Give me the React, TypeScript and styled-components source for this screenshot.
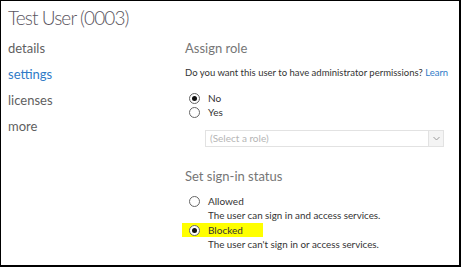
import styled, { createGlobalStyle } from 'styled-components';

const GlobalStyle = createGlobalStyle`
  html, body {
    margin: 0;
    padding: 0;
    background: #fff;
  }
  body {
    font-family: Lato, 'Open Sans', sans-serif;
  }
`;

const Frame = styled.div`
  box-sizing: border-box;
  width: 461px;
  height: 267px;
  border: 1px solid #000;
  border-right-width: 2px;
  border-bottom-width: 2px;
  overflow: hidden;
  background: #fff;
`;

const Title = styled.h1`
  margin: 0;
  padding: 4px 0 0 7px;
  font-size: 19px;
  letter-spacing: -0.9px;
  font-weight: 300;
  color: #5a5560;
  line-height: 25px;
`;

const Body = styled.div`
  display: grid;
  grid-template-columns: 184px 1fr;
  margin-top: 9px;
`;

const Nav = styled.ul`
  list-style: none;
  margin: 0;
  padding: 0 0 0 7px;
  display: flex;
  flex-direction: column;
  gap: 8px;
`;

const NavItem = styled.li<{ $active?: boolean }>`
  font-size: 13px;
  line-height: 18px;
  color: ${(p) => (p.$active ? '#2f7bc7' : '#5f5f5f')};
`;

const Content = styled.div`
  display: flex;
  flex-direction: column;
  white-space: nowrap;
`;

const SectionTitle = styled.h2`
  margin: 0;
  font-size: 13px;
  font-weight: 400;
  color: #767676;
  line-height: 18px;
`;

const Question = styled.p`
  margin: 9px 0 0;
  font-size: 9.5px;
  line-height: 14px;
  color: #333;
`;

const Link = styled.span`
  color: #2f7bc7;
`;

const RadioGroup = styled.div<{ $top: number }>`
  display: flex;
  flex-direction: column;
  margin-top: ${(p) => p.$top}px;
`;

const RadioRow = styled.label<{ $highlight?: boolean }>`
  display: flex;
  align-items: center;
  gap: 8px;
  height: 14px;
  font-size: 10px;
  color: #333;
  width: fit-content;
  margin-left: -3px;
  padding: 0 20px 0 7px;
  background: ${(p) => (p.$highlight ? '#ffff00' : 'transparent')};
`;

const RadioCircle = styled.span<{ $checked?: boolean }>`
  box-sizing: border-box;
  width: 11px;
  height: 11px;
  border: 1px solid #666;
  border-radius: 50%;
  background: #fff;
  display: flex;
  align-items: center;
  justify-content: center;
  &::after {
    content: '';
    width: 5px;
    height: 5px;
    border-radius: 50%;
    background: ${(p) => (p.$checked ? '#111' : 'transparent')};
  }
`;

const RadioText = styled.span`
  line-height: 14px;
`;

const Hint = styled.div`
  font-size: 9.8px;
  line-height: 15px;
  color: #333;
  padding-left: 23px;
`;

const Select = styled.div`
  display: flex;
  align-items: stretch;
  box-sizing: border-box;
  width: 239px;
  height: 17px;
  margin: 11px 0 0 20px;
  border: 1px solid #e2e2e2;
  background: #fff;
`;

const SelectText = styled.span`
  flex: 1;
  font-size: 10px;
  line-height: 15px;
  color: #b5b5b5;
  padding-left: 4px;
`;

const SelectArrow = styled.span`
  width: 14px;
  border-left: 1px solid #e2e2e2;
  background: #f4f4f4;
  display: flex;
  align-items: center;
  justify-content: center;
`;

const Spacer = styled.div<{ $h: number }>`
  height: ${(p) => p.$h}px;
`;

function Radio({ checked, label, highlight }: { checked?: boolean; label: string; highlight?: boolean }) {
  return (
    <RadioRow $highlight={highlight}>
      <RadioCircle $checked={checked} />
      <RadioText>{label}</RadioText>
    </RadioRow>
  );
}

export default function App() {
  return (
    <>
      <GlobalStyle />
      <Frame>
        <Title>Test User (0003)</Title>
        <Body>
          <Nav>
            <NavItem>details</NavItem>
            <NavItem $active>settings</NavItem>
            <NavItem>licenses</NavItem>
            <NavItem>more</NavItem>
          </Nav>
          <Content>
            <SectionTitle>Assign role</SectionTitle>
            <Question>
              Do you want this user to have administrator permissions? <Link>Learn</Link>
            </Question>
            <RadioGroup $top={11}>
              <Radio checked label="No" />
              <Radio label="Yes" />
            </RadioGroup>
            <Select>
              <SelectText>(Select a role)</SelectText>
              <SelectArrow>
                <svg width="7" height="5" viewBox="0 0 7 5">
                  <path d="M0.5 1 L3.5 4 L6.5 1" fill="none" stroke="#9a9a9a" strokeWidth="1" />
                </svg>
              </SelectArrow>
            </Select>
            <Spacer $h={20} />
            <SectionTitle>Set sign-in status</SectionTitle>
            <RadioGroup $top={9}>
              <Radio label="Allowed" />
              <Hint>The user can sign in and access services.</Hint>
              <Radio checked label="Blocked" highlight />
              <Hint>The user can't sign in or access services.</Hint>
            </RadioGroup>
          </Content>
        </Body>
      </Frame>
    </>
  );
}
